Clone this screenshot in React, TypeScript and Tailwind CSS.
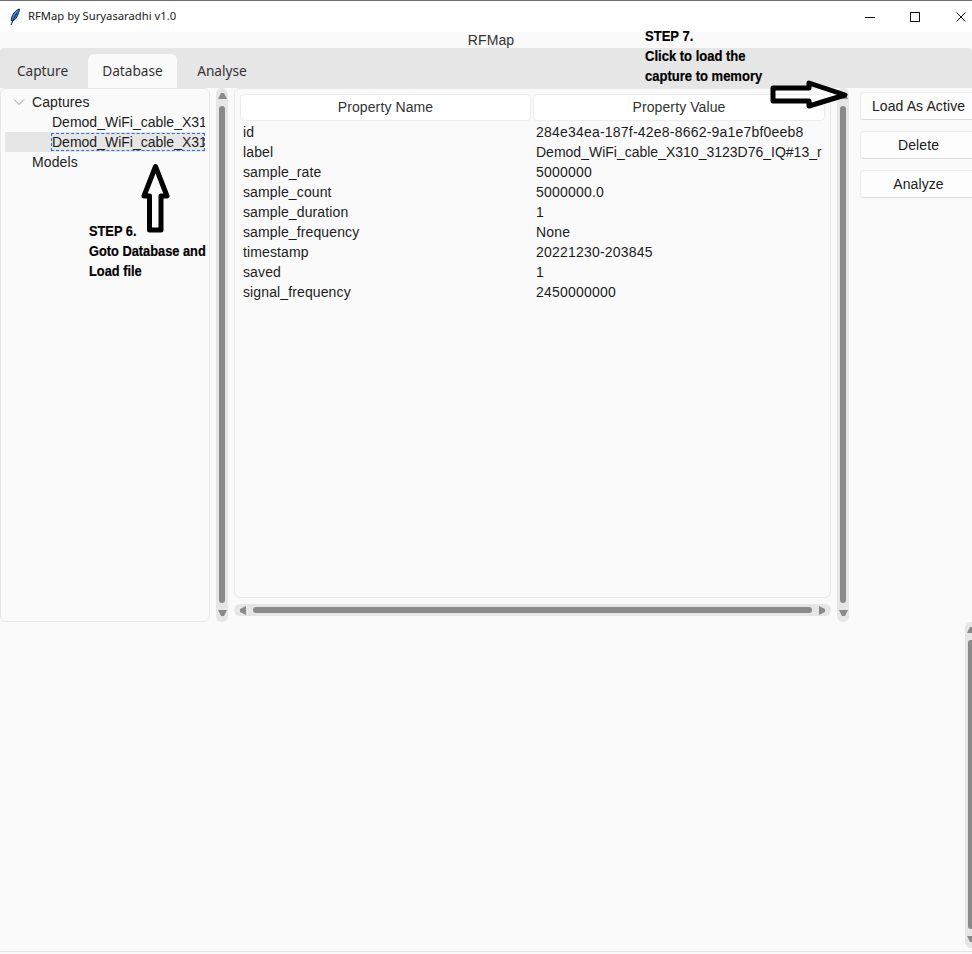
const sans = "font-['Liberation_Sans',Arial,sans-serif]"

const rows = [
  ['id', '284e34ea-187f-42e8-8662-9a1e7bf0eeb8'],
  ['label', 'Demod_WiFi_cable_X310_3123D76_IQ#13_run1_sigMF'],
  ['sample_rate', '5000000'],
  ['sample_count', '5000000.0'],
  ['sample_duration', '1'],
  ['sample_frequency', 'None'],
  ['timestamp', '20221230-203845'],
  ['saved', '1'],
  ['signal_frequency', '2450000000'],
]

function Tri({ dir }: { dir: 'up' | 'down' | 'left' | 'right' }) {
  const pts = {
    up: '0,7 4,0 8,0 12,7',
    down: '0,0 12,0 8,7 4,7',
    left: '7,0 7,12 0,8 0,4',
    right: '0,0 0,12 7,8 7,4',
  }[dir]
  const vertical = dir === 'up' || dir === 'down'
  return (
    <svg
      width={vertical ? 9 : 6}
      height={vertical ? 6 : 9}
      viewBox={vertical ? '0 0 12 7' : '0 0 7 12'}
      preserveAspectRatio="none"
      className="shrink-0"
    >
      <polygon points={pts} fill="#8a8a8a" />
    </svg>
  )
}

function VScroll({ className }: { className: string }) {
  return (
    <div className={`w-3 shrink-0 rounded-md bg-[#e6e6e6] flex flex-col items-center pt-[5px] pb-[6px] ${className}`}>
      <Tri dir="up" />
      <div className="w-[6px] flex-1 mt-[7px] mb-[7px] rounded-[3px] bg-[#8a8a8a]" />
      <Tri dir="down" />
    </div>
  )
}

function HScroll() {
  return (
    <div className="h-3 mt-[6px] rounded-md bg-[#e6e6e6] flex items-center pl-[6px] pr-[6px]">
      <Tri dir="left" />
      <div className="h-[6px] flex-1 ml-[7px] mr-[7px] rounded-[3px] bg-[#8a8a8a]" />
      <Tri dir="right" />
    </div>
  )
}

function Btn({ label }: { label: string }) {
  return (
    <button className="w-[116px] h-[28px] pl-px rounded-[4px] bg-[#fdfdfd] border border-[#ececec] border-b-[#dcdcdc] text-[14px] text-[#202020] text-center">
      {label}
    </button>
  )
}

export default function App() {
  return (
    <div className={`relative w-[972px] h-[954px] overflow-hidden bg-[#fafafa] flex flex-col text-[14px] tracking-[0.1px] text-[#1c1c1c] ${sans}`}>
      {/* title bar */}
      <div className="h-8 shrink-0 bg-white border-t border-[#707070] flex items-center pl-[9px] font-['Noto_Sans',sans-serif] text-[11.25px] tracking-normal text-[#222]">
        <svg width="12" height="18" viewBox="0 0 12 18" className="mr-[7px]">
          <path d="M10.5 1C6.5 2.2 3 6.5 2.3 11c-.2 1.5.2 2.3 1 2.2 3-.6 6.4-6.6 7.2-12.2Z" fill="#3f8ae0" stroke="#0d1f38" strokeWidth="1" />
          <path d="M8 5C6 8 4 12 2 17" stroke="#0d1f38" strokeWidth="1" fill="none" />
        </svg>
        <span>RFMap by Suryasaradhi v1.0</span>
        <div className="ml-auto flex items-center">
          <svg width="10" height="10" viewBox="0 0 10 10" className="mr-[35px]">
            <path d="M0 5.5h10" stroke="#111" strokeWidth="1" />
          </svg>
          <svg width="10" height="10" viewBox="0 0 10 10" className="mr-[36px]">
            <rect x=".5" y=".5" width="9" height="9" fill="none" stroke="#111" strokeWidth="1" />
          </svg>
          <svg width="10" height="10" viewBox="0 0 10 10" className="mr-[6px]">
            <path d="M.5 .5l9 9M9.5 .5l-9 9" stroke="#111" strokeWidth="1" />
          </svg>
        </div>
      </div>

      {/* app title */}
      <div className="h-4 shrink-0 flex items-center justify-center pl-[10px] pt-[1px] text-[14px] text-[#333]">RFMap</div>

      {/* tabs */}
      <div className="h-10 shrink-0 bg-[#e6e6e6] rounded-t-[4px] flex items-end font-['Noto_Sans',sans-serif] text-[13.7px] tracking-normal text-[#333]">
        <div className="w-[88px] h-[34px] flex items-center justify-center pr-[3px]">Capture</div>
        <div className="w-[89px] h-[34px] bg-[#fafafa] rounded-t-md flex items-center justify-center">Database</div>
        <div className="w-[90px] h-[34px] flex items-center justify-center">Analyse</div>
      </div>

      {/* main panes */}
      <div className="flex h-[534px] shrink-0">
        <div className="w-[210px] shrink-0 border border-[#e8e8e8] rounded-md pt-[3px] pl-[4px] pr-[4px]">
          <div className="h-5 flex items-center">
            <svg width="12" height="8" viewBox="0 0 12 8" className="ml-[8px] mr-[7px]">
              <path d="M1 1.5l5 5 5-5" fill="none" stroke="#9a9a9a" strokeWidth="1" />
            </svg>
            <span>Captures</span>
          </div>
          <div className="h-5 flex items-center pl-[47px] whitespace-nowrap overflow-hidden tracking-normal">Demod_WiFi_cable_X310_3123D76</div>
          <div className="h-5 flex items-center pl-[46px] bg-[#e6e6e6]">
            <div className="overflow-hidden whitespace-nowrap w-[154px] h-[18px] leading-[16px] tracking-normal border border-dashed border-[#2f6fd6]">Demod_WiFi_cable_X310_3123D76</div>
          </div>
          <div className="h-5 flex items-center pl-[27px]">Models</div>
        </div>

        <VScroll className="ml-[6px]" />

        <div className="w-[597px] shrink-0 ml-[6px] flex flex-col">
          <div className="h-[510px] border border-[#e8e8e8] rounded-md pt-[5px] pl-[5px] overflow-hidden">
            <div className="flex gap-[2px] text-[#333]">
              <div className="w-[291px] h-[27px] bg-white border border-[#ececec] rounded-[4px] flex items-center justify-center">Property Name</div>
              <div className="w-[292px] h-[27px] bg-white border border-[#ececec] rounded-[4px] flex items-center justify-center">Property Value</div>
            </div>
            <div className="mt-px">
              {rows.map(([name, value]) => (
                <div key={name} className="flex h-5 items-center">
                  <div className="w-[293px] pl-[3px] shrink-0 tracking-[0.12px]">{name}</div>
                  <div className={`w-[289px] pl-[3px] overflow-hidden whitespace-nowrap ${name === 'label' ? 'tracking-normal' : 'tracking-[0.21px]'}`}>{value}</div>
                </div>
              ))}
            </div>
          </div>
          <HScroll />
        </div>

        <VScroll className="ml-[6px]" />

        <div className="ml-[11px] pt-[4px] flex flex-col gap-[11px] shrink-0">
          <Btn label="Load As Active" />
          <Btn label="Delete" />
          <Btn label="Analyze" />
        </div>
      </div>

      {/* lower area */}
      <div className="h-[326px] shrink-0 flex justify-end">
        <VScroll className="-mr-[5px]" />
      </div>
      <div className="mt-[3px] border-t border-[#e4e4e4]" />

      {/* annotations pasted over the window */}
      <div className="absolute left-[89px] top-[221px] text-[14px] leading-[20px] tracking-normal font-bold text-black [-webkit-text-stroke:0.2px_black] scale-x-[0.915] origin-left whitespace-nowrap">
        <div>STEP 6.</div>
        <div>Goto Database and</div>
        <div>Load file</div>
      </div>
      <div className="absolute left-[645px] top-[26px] text-[14px] leading-[20px] tracking-normal font-bold text-black [-webkit-text-stroke:0.2px_black] scale-x-[0.93] origin-left whitespace-nowrap">
        <div>STEP 7.</div>
        <div>Click to load the</div>
        <div>capture to memory</div>
      </div>
      <svg width="30" height="72" viewBox="0 0 30 72" className="absolute left-[140px] top-[163px]">
        <path d="M15.5 3.5 L27 33 L21 33 L21 67 L9.5 67 L9.5 33 L4 33 Z" fill="none" stroke="#000" strokeWidth="5" strokeLinejoin="round" />
      </svg>
      <svg width="80" height="30" viewBox="0 0 80 30" className="absolute left-[769px] top-[80px]">
        <path d="M4 8 L40 8 L40 3 L76 15 L40 26 L40 21 L4 21 Z" fill="none" stroke="#000" strokeWidth="5" strokeLinejoin="round" />
      </svg>
    </div>
  )
}
